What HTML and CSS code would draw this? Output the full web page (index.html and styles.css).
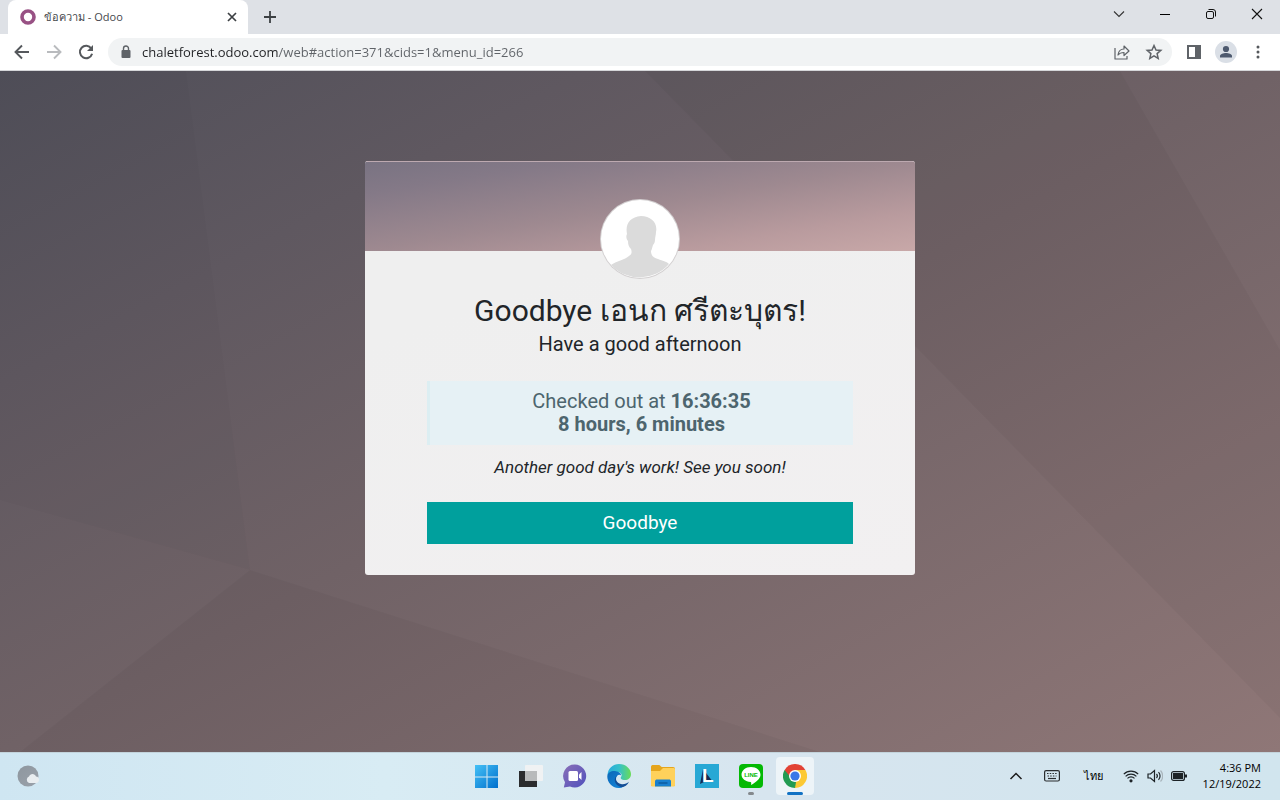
FILE: index.html
```html
<!DOCTYPE html>
<html lang="en">
<head>
    <meta charset="UTF-8">
    <meta name="viewport" content="width=device-width, initial-scale=1.0">
    <title>ข้อความ - Odoo</title>
    <link rel="stylesheet" href="styles.css">
</head>
<body>
    <header class="browser">
        <div class="tabs">
            <div class="tab">
                <svg width="16" height="16" viewBox="0 0 16 16"><circle cx="8" cy="8" r="6" fill="none" stroke="#985184" stroke-width="3.6"/></svg>
                <span class="tab-title">ข้อความ - Odoo</span>
                <button class="icon-btn" aria-label="Close tab">
                    <svg width="16" height="16" viewBox="0 0 16 16"><path d="M4 4l8 8M12 4l-8 8" stroke="#3c4043" stroke-width="1.7"/></svg>
                </button>
            </div>
            <button class="icon-btn new-tab" aria-label="New tab">
                <svg width="16" height="16" viewBox="0 0 16 16"><path d="M8 2v12M2 8h12" stroke="#3c4043" stroke-width="1.8"/></svg>
            </button>
            <div class="window-buttons">
                <button class="icon-btn" aria-label="Search tabs">
                    <svg width="16" height="16" viewBox="0 0 16 16"><path d="M3 5.5l5 5 5-5" fill="none" stroke="#333" stroke-width="1.1"/></svg>
                </button>
                <button class="icon-btn" aria-label="Minimize">
                    <svg width="16" height="16" viewBox="0 0 16 16"><path d="M3 8.500h10" stroke="#000"/></svg>
                </button>
                <button class="icon-btn" aria-label="Restore">
                    <svg width="16" height="16" viewBox="0 0 16 16" fill="none" stroke="#111"><rect x="3.500" y="5.500" width="7" height="7" rx="1.500"/><path d="M5.500 3.500h4.500a2.500 2.500 0 0 1 2.500 2.500v4.500"/></svg>
                </button>
                <button class="icon-btn" aria-label="Close">
                    <svg width="16" height="16" viewBox="0 0 16 16"><path d="M3 3l10 10M13 3L3 13" stroke="#111" stroke-width="1.1"/></svg>
                </button>
            </div>
        </div>
        <div class="toolbar">
            <button class="icon-btn" aria-label="Back">
                <svg width="20" height="20" viewBox="0 0 20 20" fill="none" stroke="#55585c" stroke-width="1.9"><path d="M17 10H4M10 3.500L3.500 10l6.500 6.500"/></svg>
            </button>
            <button class="icon-btn" aria-label="Forward">
                <svg width="20" height="20" viewBox="0 0 20 20" fill="none" stroke="#b9bbbe" stroke-width="1.900"><path d="M3 10h13M10 3.500l6.500 6.500-6.500 6.500"/></svg>
            </button>
            <button class="icon-btn" aria-label="Reload">
                <svg width="20" height="20" viewBox="0 0 20 20"><path d="M15.300 6.500a6.200 6.200 0 1 0 .8 5.200" fill="none" stroke="#55585c" stroke-width="2"/><path d="M17 3v6h-6z" fill="#55585c"/></svg>
            </button>
            <form class="address">
                <svg width="16" height="16" viewBox="0 0 16 16"><rect x="3.500" y="6" width="9" height="8" rx="1" fill="#5f6368"/><path d="M5.500 6V4.500a2.500 2.500 0 0 1 5 0V6" fill="none" stroke="#5f6368" stroke-width="1.400"/></svg>
                <input class="url" type="text" aria-label="Address" value="chaletforest.odoo.com/web#action=371&amp;cids=1&amp;menu_id=266">
                <button type="button" class="icon-btn" aria-label="Share">
                    <svg width="18" height="18" viewBox="0 0 18 18" fill="none" stroke="#5f6368" stroke-width="1.200" stroke-linejoin="round"><path d="M2 5v11h12v-3"/><path d="M5 12c.5-4 3-6 6-6V3l5 5-5 4.500v-3c-2.600 0-4.500.6-6 2.500z"/></svg>
                </button>
                <button type="button" class="icon-btn" aria-label="Bookmark">
                    <svg width="18" height="18" viewBox="0 0 18 18"><path d="M9 2.500l2 4.500 4.800.4-3.700 3.200 1.100 4.800L9 12.900l-4.200 2.500 1.100-4.800-3.700-3.200L7 7z" fill="none" stroke="#5f6368" stroke-width="1.500"/></svg>
                </button>
            </form>
            <div class="toolbar-right">
                <button class="icon-btn" aria-label="Side panel">
                    <svg width="16" height="16" viewBox="0 0 16 16"><path d="M1 1h14v14H1zM3 3v10h6V3z" fill="#5f6368" fill-rule="evenodd"/></svg>
                </button>
                <button class="icon-btn" aria-label="Profile">
                    <svg width="22" height="22" viewBox="0 0 22 22"><circle cx="11" cy="11" r="11" fill="#dadfe6"/><circle cx="11" cy="8" r="3.100" fill="#4d596e"/><path d="M5 16.500v-1.500c0-2 3.500-3 6-3s6 1 6 3v1.500z" fill="#4d596e"/></svg>
                </button>
                <button class="icon-btn" aria-label="Menu">
                    <svg width="16" height="16" viewBox="0 0 16 16" fill="#55585c"><circle cx="8" cy="3" r="1.500"/><circle cx="8" cy="8" r="1.500"/><circle cx="8" cy="13" r="1.500"/></svg>
                </button>
            </div>
        </div>
    </header>

    <main class="kiosk">
        <!-- shaded facets of the wallpaper -->
        <svg class="facets" viewBox="0 0 1280 681" preserveAspectRatio="none">
            <path d="M0 0h186l64 499L0 429z" fill="#000" opacity=".02"/>
            <path d="M250 499l570 182H20z" fill="#000" opacity=".03"/>
            <path d="M645 0h475l160 279v368z" fill="#000" opacity=".03"/>
        </svg>
        <div class="card">
            <div class="card-top"></div>
            <svg class="avatar" viewBox="0 0 80 80">
                <circle cx="40" cy="40" r="40" fill="#d3d0d1"/>
                <circle cx="40" cy="40" r="39" fill="#fff"/>
                <path d="M11 66c5-4 14-5 18-9 3-2 3-4 2-7-2-2-3-4-3-8-2-2-2-5-1-7-2-10 3-17 14-18 10 0 17 7 15 16 0 3-1 5-1 8 0 2-1 4-2 5-1 3-1 4-2 6 0 5 3 7 7 8 5 2 8 2 11 5A39 39 0 0 1 11 66z" fill="#dbdbdb"/>
            </svg>
            <h1>Goodbye เอนก ศรีตะบุตร!</h1>
            <h2>Have a good afternoon</h2>
            <div class="alert">
                Checked out at <b>16:36:35</b><br>
                <b>8 hours, 6 minutes</b>
            </div>
            <p class="message">Another good day's work! See you soon!</p>
            <button class="goodbye">Goodbye</button>
        </div>
    </main>

    <footer class="taskbar">
        <div class="widgets">
            <button class="icon-btn" aria-label="Weather">
                <svg width="24" height="24" viewBox="0 0 24 24">
                    <defs><linearGradient id="moon" x2="1" y2="1"><stop stop-color="#8e979f"/><stop offset="1" stop-color="#9aa1aa"/></linearGradient></defs>
                    <circle cx="12" cy="12" r="10.500" fill="url(#moon)"/><path d="M13 19a3.500 3.500 0 0 1 0-6.500c1-3.500 6-3.500 7 0 4 0 4 6.500 0 6.500z" fill="#e9edf0"/>
                </svg>
            </button>
        </div>
        <nav class="apps">
            <button class="app" aria-label="Start">
                <svg width="24" height="24" viewBox="0 0 24 24">
                    <defs><linearGradient id="win" x2="1" y2="1"><stop stop-color="#45c1f6"/><stop offset="1" stop-color="#006fcd"/></linearGradient></defs>
                    <path d="M0 1h11.500v11.500H0zM12.500 1H23v11.500H12.500zM0 13.500h11.500V24H0zM12.500 13.500H23V24H12.500z" fill="url(#win)"/>
                </svg>
            </button>
            <button class="app" aria-label="Task view">
                <svg width="24" height="24" viewBox="0 0 24 24"><rect x="6" y="1" width="18" height="16" rx="1" fill="#f0f2f3"/><path d="M0 7h18v16H0z" fill="#2b2c2e"/><path d="M6 7h12v10H6z" fill="#b8babb"/></svg>
            </button>
            <button class="app" aria-label="Chat">
                <svg width="24" height="24" viewBox="0 0 24 24">
                    <defs><linearGradient id="chat" x2="1" y2="1"><stop stop-color="#8a6fb7"/><stop offset="1" stop-color="#5051bd"/></linearGradient></defs>
                    <path d="M12 .5a11.500 11.500 0 1 1-5 22L.8 23.500l1.200-5.300A11.500 11.500 0 0 1 12 .5z" fill="url(#chat)"/><rect x="5.500" y="7" width="9.500" height="10" rx="1.500" fill="#fff"/><path d="M16 10.500L18.500 8v8L16 13.500z" fill="#fff"/>
                </svg>
            </button>
            <button class="app" aria-label="Edge">
                <svg width="24" height="24" viewBox="0 0 24 24">
                    <defs>
                        <linearGradient id="edge" x2="1" y2="0"><stop stop-color="#27a9dd"/><stop offset=".5" stop-color="#36c0c9"/><stop offset="1" stop-color="#69dc56"/></linearGradient>
                        <linearGradient id="edge2" x2="1" y2="1"><stop stop-color="#0b67b7"/><stop offset="1" stop-color="#1488dc"/></linearGradient>
                    </defs>
                    <path d="M.5 11C1 4 6 0 12 0c7 0 12 5 12 10 0 4-3 6-6 6-3.500 0-5-1.500-4-3 2-3-1-5-4-5-4 0-8 2-9.500 3z" fill="url(#edge)"/>
                    <path d="M.3 12C1 8 5 6.500 9 7.200c3 .5 5 2 5 4-2-1.500-5 0-5 4 0 5 5 7 9 6-2 2-4 2.800-6.500 2.800C5 24 0 18 .3 12z" fill="url(#edge2)"/>
                    <path d="M10 11c-2.500 4-.5 8 4 9 3 .7 6-.8 8-2.300-1.500 3.500-4.500 5-7.500 5.500C9 22 5 16 10 11z" fill="#134e96"/>
                </svg>
            </button>
            <button class="app" aria-label="File explorer">
                <svg width="24" height="24" viewBox="0 0 24 24"><path d="M0 3c0-1 .5-2 1.500-2H8c1 0 2 2 3 2h11c1.500 0 2 .8 2 2v17H0z" fill="#e5a51d"/><path d="M0 7h9l3-3h10.500c1 0 1.500.5 1.500 1.500V21c0 1-.5 1.500-1.500 1.500h-21C.5 22.500 0 22 0 21z" fill="#ffd15b"/><path d="M4 22.500v-5c0-1.500 1-2 2-2h12c1 0 2 .5 2 2v5z" fill="#1880cf"/><path d="M7.500 19h9" stroke="#0c5ca0" stroke-width="1.500"/></svg>
            </button>
            <button class="app" aria-label="L">
                <svg width="24" height="24" viewBox="0 0 24 24"><path d="M0 0h24v24H0z" fill="#28a8d5"/><path d="M8 5L5 20l4-2h9z" fill="#142d55"/><text class="letter" x="7" y="18">L</text></svg>
            </button>
            <button class="app running" aria-label="LINE">
                <svg width="24" height="24" viewBox="0 0 24 24"><rect width="24" height="24" rx="4" fill="#04b904"/><path d="M12 3c5.500 0 9.500 3.500 9.500 7.800 0 3.700-4.500 7.700-9.500 10.200.3-1.500.5-2.800-.5-3C6.500 17.700 2.500 14.500 2.500 10.800 2.500 6.500 6.500 3 12 3z" fill="#fff"/><text class="line-name" x="12" y="13">LINE</text></svg>
            </button>
            <button class="app active" aria-label="Chrome">
                <svg width="24" height="24" viewBox="0 0 24 24"><path d="M12 12L1.610 6A12 12 0 0 1 22.400 6z" fill="#e24234"/><path d="M12 12L22.400 6A12 12 0 0 1 12 24z" fill="#fcc934"/><path d="M12 12v12A12 12 0 0 1 1.600 6z" fill="#239b52"/><path d="M12 6h10.400l-6 9z" fill="#fcc934"/><path d="M1.600 6l5.500 9.500L12 12z" fill="#239b52"/><path d="M1.600 6L12 6v6H6.500z" fill="#e24234"/><path d="M17 14.500L12 24l-2-6z" fill="#fcc934"/><path d="M6.600 14.500L12 24l1-6z" fill="#239b52"/><circle cx="12" cy="12" r="6" fill="#fff"/><circle cx="12" cy="12" r="4.600" fill="#3b78e7"/></svg>
            </button>
        </nav>
        <div class="tray">
            <button class="icon-btn" aria-label="Hidden icons">
                <svg width="16" height="16" viewBox="0 0 16 16"><path d="M2.500 11L8 5.500l5.500 5.500" fill="none" stroke="#1c1c1c" stroke-width="1.500"/></svg>
            </button>
            <button class="icon-btn" aria-label="Touch keyboard">
                <svg width="16" height="16" viewBox="0 0 16 16" fill="none" stroke="#2a2d2f" stroke-width="1.200"><rect x=".6" y="2.600" width="14.800" height="10.400" rx="1.500"/><path d="M3 5.500h10M3.500 8h9" stroke-dasharray="1.500 1.200"/><path d="M4 10.500h8"/></svg>
            </button>
            <button class="icon-btn language">ไทย</button>
            <button class="icon-btn status" aria-label="Network, volume and battery">
                <svg width="16" height="16" viewBox="0 0 16 16" fill="none" stroke="#1c2226" stroke-width="1.200"><path d="M.8 6.200a10.200 10.200 0 0 1 14.400 0M2.600 8.300a7.600 7.600 0 0 1 10.800 0M4.500 10.400a5 5 0 0 1 7 0"/><circle cx="8" cy="12.800" r="1" fill="#1c2226"/></svg>
                <svg width="16" height="16" viewBox="0 0 16 16" fill="none" stroke="#1c2226" stroke-width="1.200"><path d="M1 6h2.500L7.500 2.500v11L3.500 10H1z"/><path d="M9.500 6a3 3 0 0 1 0 4M11.500 4.200a5.500 5.500 0 0 1 0 7.600"/><path d="M13.500 2.500a8 8 0 0 1 0 11" stroke="#a9b5bc"/></svg>
                <svg width="16" height="16" viewBox="0 0 16 16"><rect x=".6" y="3.600" width="12.800" height="8.800" rx="2" fill="none" stroke="#1c2226" stroke-width="1.200"/><path d="M2 5h10v6H2zM14 6.500h2v3h-2z" fill="#1c2226"/></svg>
            </button>
            <button class="icon-btn clock">4:36 PM<br>12/19/2022</button>
        </div>
    </footer>
</body>
</html>
```

FILE: styles.css
```css
*{
    box-sizing: border-box;
}

body{
    margin: 0;
    min-height: 100vh;
    display: flex;
    flex-direction: column;
    font-family: Roboto, "Noto Sans", sans-serif;
    color: #212529;
}

svg{
    display: block;
    flex-shrink: 0;
}

button{
    font-family: inherit;
    border: 0;
    cursor: pointer;
}

.icon-btn{
    padding: 0;
    background: none;
    display: flex;
    align-items: center;
    justify-content: center;
}

/* browser */
.browser{
    border-bottom: 1px solid #d5d6d9;
    font-family: "Open Sans", "Noto Sans", sans-serif;
}

.tabs{
    display: flex;
    align-items: center;
    height: 34px;
    padding-left: 8px;
    background-color: #dee1e6;
}

.tab{
    display: flex;
    align-items: center;
    gap: 8px;
    width: 240px;
    height: 34px;
    padding: 0 8px 0 12px;
    background-color: #fff;
    border-radius: 8px 8px 0 0;
}

.tab-title{
    flex: 1;
    font-size: 11px;
    color: #45484c;
}

.new-tab{
    margin-left: 14px;
}

.window-buttons{
    display: flex;
    gap: 30px;
    margin-left: auto;
    padding: 0 15px 6px 0;
}

.toolbar{
    display: flex;
    align-items: center;
    gap: 12px;
    height: 36px;
    padding: 0 14px 0 12px;
    background-color: #fff;
}

.toolbar-right{
    display: flex;
    align-items: center;
    gap: 13px;
    margin-left: 2px;
}

.address{
    flex: 1;
    display: flex;
    align-items: center;
    gap: 14px;
    height: 28px;
    padding: 0 9px 0 10px;
    background-color: #f1f3f4;
    border-radius: 14px;
}

.url{
    flex: 1;
    min-width: 0;
    margin-left: -6px;
    padding: 0;
    border: 0;
    outline: 0;
    font-family: inherit;
    font-size: 13px;
    /* host is darker than the path */
    color: transparent;
    background: linear-gradient(90deg, #202124 137px, #5f6368 137px);
    -webkit-background-clip: text;
    background-clip: text;
}

/* kiosk */
.kiosk{
    position: relative;
    flex: 1;
    display: flex;
    justify-content: center;
    align-items: flex-start;
    padding: 90px 16px;
    background: linear-gradient(to bottom right, #504f59 0%, #5f5860 23%, #706266 50%, #8f7777 100%);
}

.facets{
    position: absolute;
    top: 0;
    left: 0;
    width: 100%;
    height: 100%;
}

.card{
    position: relative;
    display: flex;
    flex-direction: column;
    align-items: center;
    width: 100%;
    max-width: 550px;
    padding: 0 62px 31px;
    background: linear-gradient(160deg, #efefef 30%, #f2f0f1);
    border-radius: 3px;
    overflow: hidden;
    text-align: center;
}

.card-top{
    align-self: stretch;
    height: 90px;
    margin: 0 -62px;
    border-top: 1px solid #bda9b0;
    background: linear-gradient(to bottom right, #797382 0%, #847987 18%, #9e8990 50%, #b99b9e 78%, #c8a8a8 100%);
}

.avatar{
    width: 80px;
    height: 80px;
    margin-top: -52px;
}

h1{
    margin: 14px 0 0;
    font-size: 30px;
    font-weight: 400;
    line-height: 36px;
}

h2{
    margin: 3px 0 0;
    font-size: 20px;
    font-weight: 400;
    line-height: 24px;
}

.alert{
    width: 100%;
    margin-top: 25px;
    padding: 9px 16px;
    border-left: 3px solid #dceef2;
    background-color: #e6f1f5;
    color: #4d656e;
    font-size: 20px;
    line-height: 23px;
}

.message{
    margin: 11px 0 24px;
    font-size: 17px;
    font-style: italic;
    line-height: 22px;
}

.goodbye{
    width: 100%;
    padding: 9px;
    background-color: #00a09d;
    color: #fff;
    font-size: 19px;
    line-height: 24px;
}

/* taskbar */
.taskbar{
    display: grid;
    grid-template-columns: 1fr auto 1fr;
    align-items: center;
    height: 48px;
    padding: 0 19px 2px 16px;
    background: linear-gradient(90deg, #cfe6f2, #d8ecf4 30%, #d7e5ef 60%, #d1e5ee);
    border-top: 1px solid #c3d4dc;
    font-family: "Open Sans", "Noto Sans", sans-serif;
}

.apps{
    display: flex;
    gap: 6px;
    margin-left: 4px;
}

.app{
    position: relative;
    display: flex;
    align-items: center;
    justify-content: center;
    width: 38px;
    height: 38px;
    padding: 0;
    background: none;
    border-radius: 4px;
}

.active{
    background-color: #edf4f8;
}

.running::after,
.active::after{
    content: "";
    position: absolute;
    bottom: 0;
    width: 6px;
    height: 3px;
    border-radius: 2px;
    background-color: #84898d;
}

.active::after{
    width: 16px;
    background-color: #1172c4;
}

.letter{
    font: bold 19px "Liberation Sans", sans-serif;
    fill: #fff;
}

.line-name{
    font: bold 6px "Liberation Sans", sans-serif;
    fill: #04b904;
    text-anchor: middle;
}

.tray{
    display: flex;
    align-items: center;
    justify-content: flex-end;
    color: #1c2226;
}

.tray .icon-btn{
    margin-left: 20px;
}

.tray .language{
    margin-left: 24px;
    font-size: 11px;
}

.tray .status{
    gap: 8px;
}

.tray .clock{
    display: block;
    margin-left: 16px;
    font-size: 11px;
    line-height: 16px;
    text-align: right;
}
```
